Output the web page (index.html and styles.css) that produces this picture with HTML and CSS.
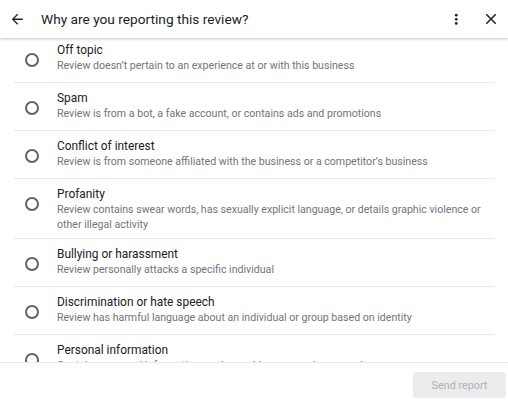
FILE: index.html
```html
<!DOCTYPE html>
<html>
<head>
<meta charset="utf-8">
<link rel="stylesheet" href="styles.css">
</head>
<body>
<div class="dialog">
  <header class="topbar">
    <button class="icon-btn back" aria-label="Back">
      <svg viewBox="0 0 24 24"><path d="M20 11H7.83l5.59-5.59L12 4l-8 8 8 8 1.41-1.41L7.83 13H20v-2z" fill="#202124"/></svg>
    </button>
    <h1 class="title">Why are you reporting this review?</h1>
    <button class="icon-btn more" aria-label="More">
      <svg viewBox="0 0 24 24"><circle cx="12" cy="6" r="2" fill="#202124"/><circle cx="12" cy="12" r="2" fill="#202124"/><circle cx="12" cy="18" r="2" fill="#202124"/></svg>
    </button>
    <button class="icon-btn close" aria-label="Close">
      <svg viewBox="0 0 24 24"><path d="M19 6.41L17.59 5 12 10.59 6.41 5 5 6.41 10.59 12 5 17.59 6.41 19 12 13.41 17.59 19 19 17.59 13.41 12z" fill="#202124"/></svg>
    </button>
  </header>
  <main class="scroller">
    <ul class="options">
      <li class="option"><span class="radio"></span><div class="text"><div class="label">Off topic</div><div class="desc">Review doesn’t pertain to an experience at or with this business</div></div></li>
      <li class="option"><span class="radio"></span><div class="text"><div class="label">Spam</div><div class="desc">Review is from a bot, a fake account, or contains ads and promotions</div></div></li>
      <li class="option"><span class="radio"></span><div class="text"><div class="label">Conflict of interest</div><div class="desc">Review is from someone affiliated with the business or a competitor’s business</div></div></li>
      <li class="option"><span class="radio"></span><div class="text"><div class="label">Profanity</div><div class="desc">Review contains swear words, has sexually explicit language, or details graphic violence or other illegal activity</div></div></li>
      <li class="option"><span class="radio"></span><div class="text"><div class="label">Bullying or harassment</div><div class="desc">Review personally attacks a specific individual</div></div></li>
      <li class="option"><span class="radio"></span><div class="text"><div class="label">Discrimination or hate speech</div><div class="desc">Review has harmful language about an individual or group based on identity</div></div></li>
      <li class="option"><span class="radio"></span><div class="text"><div class="label">Personal information</div><div class="desc">Contains personal information, such as addresses or phone numbers</div></div></li>
    </ul>
  </main>
  <footer class="footer">
    <button class="send" disabled>Send report</button>
  </footer>
</div>
</body>
</html>
```
FILE: styles.css
```css
html, body {
  margin: 0;
  padding: 0;
  background: #fff;
}
body {
  font-family: Roboto, "Liberation Sans", Arial, sans-serif;
  color: #202124;
}
.dialog {
  width: 508px;
  height: 400px;
  display: flex;
  flex-direction: column;
  overflow: hidden;
}
.topbar {
  height: 38px;
  flex: none;
  display: flex;
  align-items: center;
  box-shadow: 0 1px 3px rgba(60, 64, 67, 0.3);
  position: relative;
  z-index: 2;
  background: #fff;
}
.icon-btn {
  border: 0;
  background: none;
  padding: 0;
  display: flex;
  align-items: center;
  justify-content: center;
  cursor: pointer;
}
.icon-btn svg {
  display: block;
  width: 100%;
  height: 100%;
}
.back {
  width: 16.5px;
  height: 16.5px;
  margin-left: 9px;
}
.title {
  margin: 0 0 0 15.5px;
  font-size: 13.7px;
  font-weight: 400;
  flex: 1;
  color: #202124;
  line-height: 18px;
}
.more {
  width: 16.5px;
  height: 16.5px;
  margin-right: 18px;
}
.close {
  width: 18px;
  height: 18px;
  margin-right: 8px;
}
.scroller {
  flex: 1;
  overflow: hidden;
}
.options {
  list-style: none;
  margin: -3px 0 0;
  padding: 0 14px;
}
.option {
  box-sizing: border-box;
  min-height: 48px;
  display: flex;
  align-items: flex-start;
  border-bottom: 1px solid #e8eaed;
  padding: 7px 0 6px;
}
.radio {
  flex: none;
  width: 10px;
  height: 10px;
  border: 2px solid #5f6368;
  border-radius: 50%;
  margin: 10.5px 0 0 11px;
}
.text {
  margin-left: 18px;
  flex: 1;
}
.label {
  font-size: 11.9px;
  line-height: 16px;
  color: #202124;
}
.desc {
  font-size: 10.6px;
  line-height: 15px;
  color: #70757a;
}
.footer {
  flex: none;
  height: 37px;
  border-top: 1px solid #e8eaed;
  display: flex;
  align-items: flex-start;
  justify-content: flex-end;
  padding-right: 2px;
  background: #fff;
}
.send {
  border: 0;
  border-radius: 4px;
  background: #ebeced;
  color: #aeb1b5;
  font-family: Roboto, "Liberation Sans", Arial, sans-serif;
  font-size: 10.8px;
  width: 93px;
  height: 26px;
  margin-top: 9px;
  padding: 0;
}
```
